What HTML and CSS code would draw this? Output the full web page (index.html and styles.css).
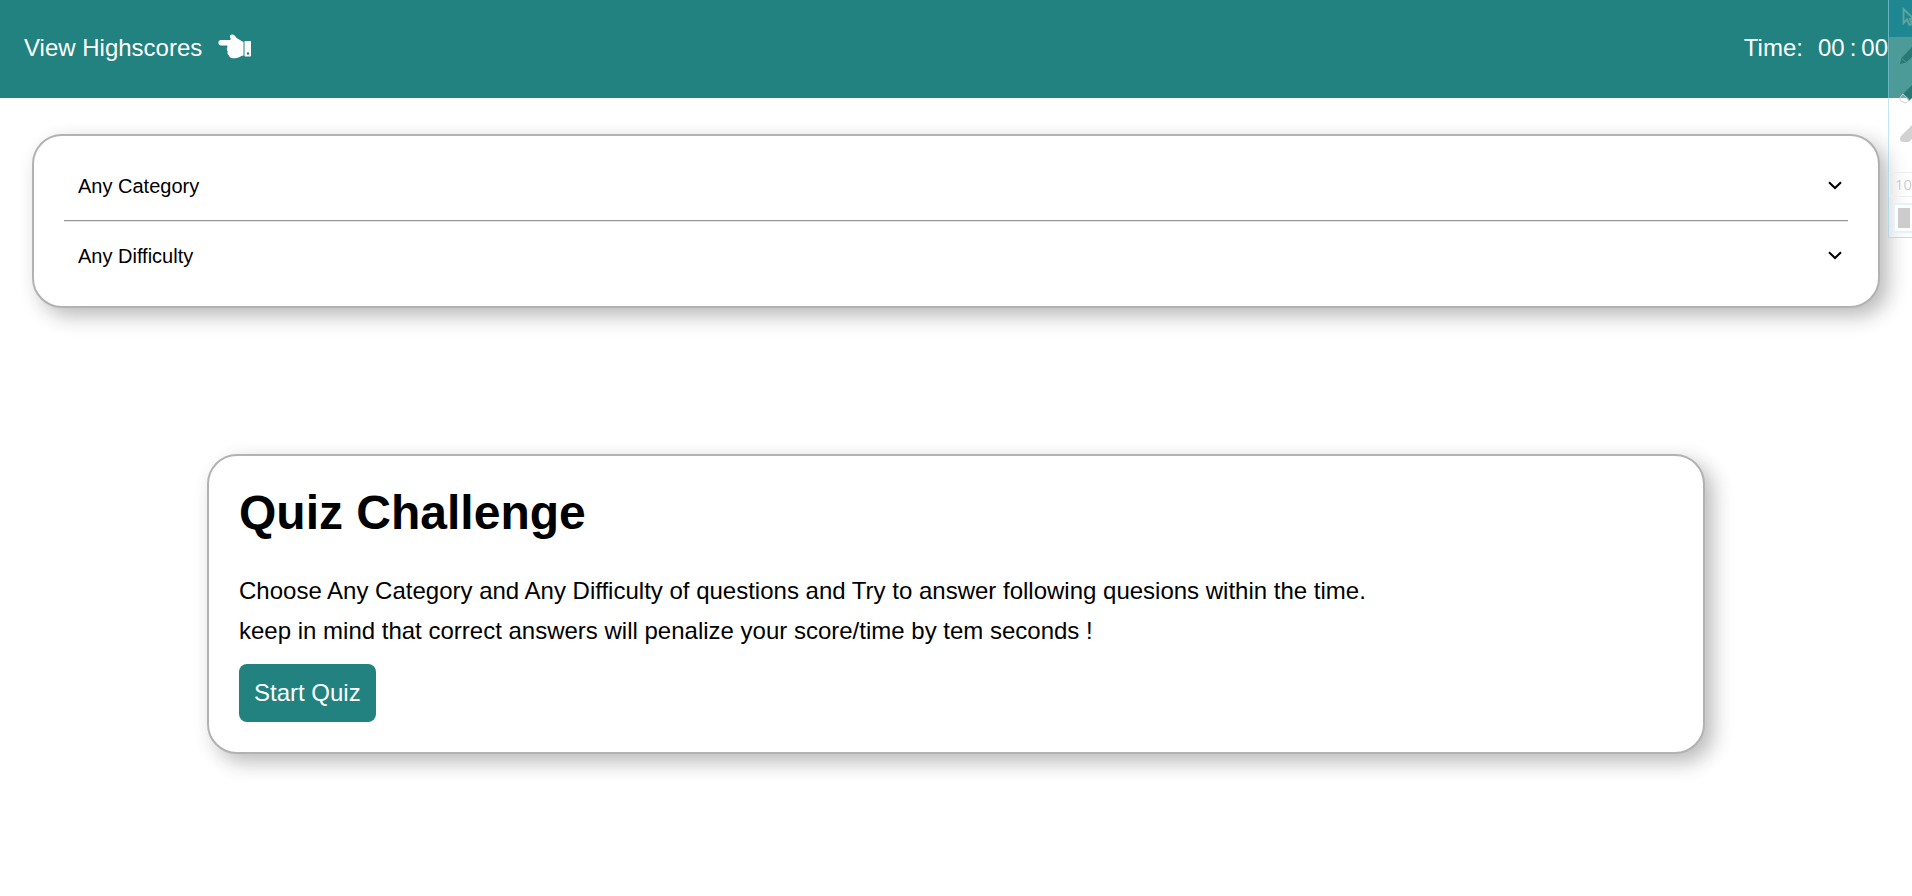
FILE: index.html
```html
<!DOCTYPE html>
<html lang="en">
<head>
<meta charset="utf-8">
<title>Quiz Challenge</title>
<link rel="stylesheet" href="styles.css">
</head>
<body>
<header class="topbar">
  <a class="scores" href="#highscores">View Highscores
    <svg class="hand" viewBox="0 0 34 25" aria-hidden="true">
      <path d="M3 6H11.500C12.500 6 13 5.500 12.500 4.500C11.300 2.500 11.800 .5 14 .4C15.800 .3 16.800 1.300 17.500 2.600C18.300 4.100 19.500 4.700 21 5.500C23 6.500 24.300 7.500 25.500 7.800V21.500C23.500 21.800 22.300 22.800 20.500 23.500C17.500 24.600 11.500 25 11 21.500C9.500 20.500 9 18.800 9.800 17.500C8.500 16 8.600 14.200 9.500 13L9.200 11.500H3C-.5 11.500-.5 6 3 6Z"/>
      <path fill-rule="evenodd" d="M27.500 7H32C32.700 7 33 7.300 33 8V21.500C33 22.200 32.700 22.500 32 22.500H27.500C26.800 22.500 26.500 22.200 26.500 21.500V8C26.500 7.300 26.800 7 27.500 7ZM30 18.200A1.300 1.300 0 1 0 30 20.800A1.300 1.300 0 1 0 30 18.200Z"/>
    </svg>
  </a>
  <div class="timer">
    <span class="timer-label">Time:</span>
    <span>00</span><span class="colon">:</span><span>00</span>
  </div>
</header>
<main>
  <form class="card filters">
    <div class="field">
      <select aria-label="Category"><option>Any Category</option></select>
      <svg class="chevron" viewBox="0 0 14 9" aria-hidden="true"><path d="M1 1.200L7 7L13 1.200"/></svg>
    </div>
    <hr class="divider">
    <div class="field">
      <select aria-label="Difficulty"><option>Any Difficulty</option></select>
      <svg class="chevron" viewBox="0 0 14 9" aria-hidden="true"><path d="M1 1.200L7 7L13 1.200"/></svg>
    </div>
  </form>
  <section class="card intro">
    <h1>Quiz Challenge</h1>
    <p>Choose Any Category and Any Difficulty of questions and Try to answer following quesions within the time.<br>keep in mind that correct answers will penalize your score/time by tem seconds !</p>
    <button class="start" type="button">Start Quiz</button>
  </section>
</main>
<aside class="tools" aria-label="Drawing tools">
  <div class="tool active">
    <svg viewBox="0 0 23 37" aria-hidden="true"><path class="cursor" d="M14.500 9V23L18 19.500L20.500 25L23 24L21 19H25Z"/></svg>
  </div>
  <div class="tool">
    <svg viewBox="0 0 23 37" aria-hidden="true"><path class="ink" d="M11 27L12.500 21L23 10V20L17 25.500Z"/><path class="tip" d="M13 22L17 25"/></svg>
  </div>
  <div class="tool">
    <svg viewBox="0 0 23 37" aria-hidden="true"><path class="ink" d="M14 20L23 11V24L20 27Z"/><path class="rubber" d="M14 20C9 24 11 27 14 28C17 30 19 28 20.500 26Z"/></svg>
  </div>
  <div class="tool">
    <svg viewBox="0 0 23 37" aria-hidden="true"><path class="marker" d="M23 14L12 25C10 28 11 31 14 31H20L23 28Z"/></svg>
  </div>
  <div class="size">10</div>
  <div class="swatch"></div>
</aside>
</body>
</html>
```
FILE: styles.css
```css
* {
  box-sizing: border-box;
}

body {
  margin: 0;
  background: #fff;
  color: #000;
  font-family: Arial, "Liberation Sans", sans-serif;
  font-size: 24px;
}

main {
  padding: 36px 32px 60px;
}

.topbar {
  display: flex;
  justify-content: space-between;
  align-items: center;
  padding: 34px 24px 36px;
  background: #21827f;
  color: #fff;
  line-height: 28px;
}

.scores {
  display: flex;
  align-items: center;
  gap: 16px;
  color: inherit;
  text-decoration: none;
}

.hand {
  width: 34px;
  height: 25px;
  margin-bottom: 3px;
  fill: #fff;
}

.timer {
  display: flex;
}

.timer-label {
  margin-right: 15px;
}

.colon {
  margin: 0 5px;
}

.card {
  border: 2px solid #b2b2b2;
  border-radius: 30px;
  background: #fff;
  box-shadow: 8px 8px 20px rgba(30, 25, 25, 0.3);
}

.filters {
  padding: 30px;
}

.field {
  display: grid;
  align-items: center;
}

.field > * {
  grid-area: 1 / 1;
}

.field select {
  width: 100%;
  height: 40px;
  padding: 0 14px;
  border: 0;
  background: transparent;
  color: #000;
  font: 20px Arial, "Liberation Sans", sans-serif;
  appearance: none;
}

.chevron {
  justify-self: end;
  width: 14px;
  height: 9px;
  margin-right: 6px;
  margin-bottom: 2px;
  fill: none;
  stroke: #000;
  stroke-width: 2;
  pointer-events: none;
}

.divider {
  height: 2px;
  margin: 14px 0;
  border: 0;
  border-top: 1px solid #999;
  border-bottom: 1px solid #e4e4e4;
}

.intro {
  margin: 146px 175px 0;
  padding: 30px;
}

.intro h1 {
  margin: 0;
  font-size: 48px;
  line-height: 54px;
}

.intro p {
  margin: 31px 0 13px;
  line-height: 40px;
}

.start {
  display: block;
  height: 58px;
  padding: 0 15px;
  border: 0;
  border-radius: 8px;
  background: #21827f;
  color: #fff;
  font: 24px Arial, "Liberation Sans", sans-serif;
}

/* Faded tool strip docked over the window's right edge */
.tools {
  position: fixed;
  top: 0;
  right: 0;
  width: 24px;
  height: 238px;
  overflow: hidden;
  border-left: 1px solid rgba(135, 206, 235, 0.5);
  border-bottom: 1px solid rgba(135, 206, 235, 0.6);
  background: rgba(255, 255, 255, 0.2);
}

.tool {
  height: 37px;
}

.tool svg {
  display: block;
  width: 23px;
  height: 37px;
}

.active {
  background: #1f8792;
}

.cursor {
  fill: none;
  stroke: #5ba59f;
  stroke-width: 2;
}

.ink {
  fill: #287875;
}

.tip {
  fill: none;
  stroke: #4d9c98;
  stroke-width: 1;
}

.rubber {
  fill: #fff;
  fill-opacity: 0.2;
  stroke: #ccc;
  stroke-width: 1;
}

.marker {
  fill: #d2d2d2;
}

.size {
  width: 40px;
  height: 25px;
  margin-top: 24px;
  padding-left: 5px;
  border: 1px solid #eee;
  color: #ccc;
  font: 15px/23px "Open Sans", sans-serif;
}

.swatch {
  width: 22px;
  height: 30px;
  margin: 6px 0 0 4px;
  border: 2px solid #e3f3f9;
  background: #ccc;
  box-shadow: inset 0 0 0 3px #fff;
}
```
